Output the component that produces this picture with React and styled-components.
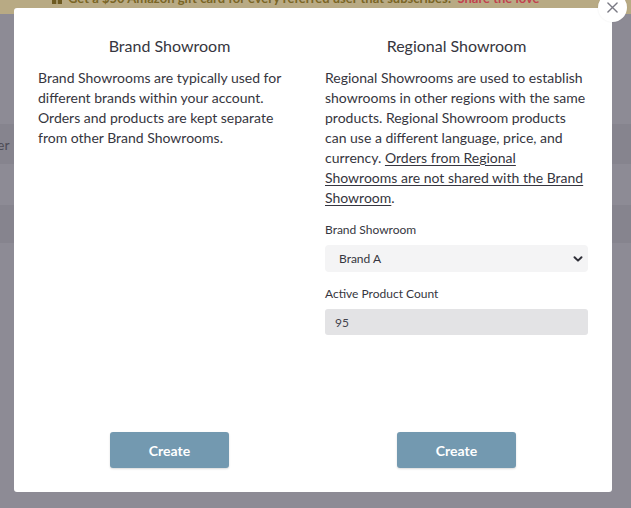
import React from "react";
import styled, { createGlobalStyle } from "styled-components";

const Global = createGlobalStyle`
  html, body { margin: 0; padding: 0; }
  body { font-family: Lato, "Open Sans", sans-serif; background: #8d8b95; overflow: hidden; }
  #root { width: 631px; height: 508px; position: relative; overflow: hidden; }
`;

const Page = styled.div`
  width: 631px;
  height: 508px;
  display: flex;
  flex-direction: column;
  background: #8d8b95;
`;

const Banner = styled.div`
  height: 14px;
  flex: none;
  background: #b8aa84;
  overflow: hidden;
  display: flex;
  align-items: flex-start;
  padding-left: 52px;
  font-size: 13px;
  font-weight: 700;
  color: #7a6525;
`;

const BannerText = styled.div`
  height: 18px;
  margin-top: -11px;
  line-height: 18px;
  display: flex;
  align-items: center;
  gap: 6px;
  white-space: nowrap;
  span.link { color: #c2414e; }
`;

const BgRow = styled.div`
  height: ${(p) => p.$h}px;
  flex: none;
  background: ${(p) => (p.$dark ? "#86848e" : "#8d8b95")};
  display: flex;
  align-items: center;
  font-size: 14px;
  color: #4e4c56;
`;

const Modal = styled.div`
  position: absolute;
  left: 14px;
  top: 8px;
  width: 598px;
  height: 484px;
  box-sizing: border-box;
  background: #fff;
  border-radius: 3px;
  padding: 24px;
  display: grid;
  grid-template-columns: 263px 263px;
  column-gap: 24px;
`;

const Column = styled.div`
  display: flex;
  flex-direction: column;
  min-height: 0;
`;

const Title = styled.h2`
  margin: 0;
  font-size: 16px;
  font-weight: 400;
  line-height: 28px;
  text-align: center;
  color: #363640;
`;

const Body = styled.p`
  margin: 8px 0 0 0;
  font-size: 14px;
  line-height: 20px;
  color: #363640;
  u { text-decoration: underline; text-underline-offset: 2px; }
`;

const Label = styled.div`
  margin-top: ${(p) => p.$mt}px;
  font-size: 12px;
  line-height: 16px;
  color: #363640;
`;

const SelectWrap = styled.div`
  margin-top: 7px;
  height: 27px;
  background: #f4f4f5;
  border-radius: 4px;
  display: flex;
  align-items: center;
  justify-content: space-between;
  padding: 0 4px 0 14px;
  font-size: 12px;
  color: #363640;
`;

const InputBox = styled.div`
  margin-top: 7px;
  height: 26px;
  background: #e3e3e5;
  border-radius: 3px;
  display: flex;
  align-items: center;
  padding: 0 10px;
  font-size: 12px;
  color: #44444e;
`;

const Spacer = styled.div`
  flex: 1;
`;

const Button = styled.button`
  align-self: center;
  width: 119px;
  height: 36px;
  border: none;
  border-radius: 3px;
  background: #7399b0;
  color: #fff;
  font-family: Lato, sans-serif;
  font-size: 14px;
  font-weight: 700;
  box-shadow: 0 1px 2px rgba(0, 0, 0, 0.15);
`;

const Close = styled.div`
  position: absolute;
  left: 584px;
  top: -15px;
  width: 29px;
  height: 29px;
  border-radius: 50%;
  background: #fff;
  display: flex;
  align-items: center;
  justify-content: center;
  box-shadow: 0 0 2px rgba(0,0,0,0.08);
`;

export default function App() {
  return (
    <>
      <Global />
      <Page>
        <Banner>
          <BannerText>
            <svg width="10" height="12" viewBox="0 0 10 12">
              <rect x="0" y="0" width="10" height="12" fill="#6d5a22" />
              <rect x="4.3" y="0" width="1.4" height="12" fill="#b8aa84" />
            </svg>
            <span>Get a $50 Amazon gift card for every referred user that subscribes!</span>
            <span className="link">Share the love</span>
          </BannerText>
        </Banner>
        <BgRow $h={110} />
        <BgRow $h={40} $dark>
          <span style={{ marginLeft: -3 }}>er</span>
        </BgRow>
        <BgRow $h={41} />
        <BgRow $h={38} $dark />
        <BgRow $h={265} />
      </Page>
      <Modal>
        <Column>
          <Title>Brand Showroom</Title>
          <Body>
            Brand Showrooms are typically used for different brands within your
            account. Orders and products are kept separate from other Brand
            Showrooms.
          </Body>
          <Spacer />
          <Button>Create</Button>
        </Column>
        <Column>
          <Title>Regional Showroom</Title>
          <Body>
            Regional Showrooms are used to establish showrooms in other regions
            with the same products. Regional Showroom products can use a
            different language, price, and currency.{" "}
            <u>Orders from Regional Showrooms are not shared with the Brand Showroom</u>.
          </Body>
          <Label $mt={14}>Brand Showroom</Label>
          <SelectWrap>
            <span>Brand A</span>
            <svg width="12" height="12" viewBox="0 0 12 12">
              <path d="M2.5 4.2 L6 7.6 L9.5 4.2" fill="none" stroke="#2f2f38" strokeWidth="2" strokeLinecap="round" strokeLinejoin="round" />
            </svg>
          </SelectWrap>
          <Label $mt={14}>Active Product Count</Label>
          <InputBox>95</InputBox>
          <Spacer />
          <Button>Create</Button>
        </Column>
        <Close>
          <svg width="11" height="11" viewBox="0 0 12 12">
            <path d="M1 1 L11 11 M11 1 L1 11" stroke="#7a7a84" strokeWidth="1.5" strokeLinecap="round" />
          </svg>
        </Close>
      </Modal>
    </>
  );
}
